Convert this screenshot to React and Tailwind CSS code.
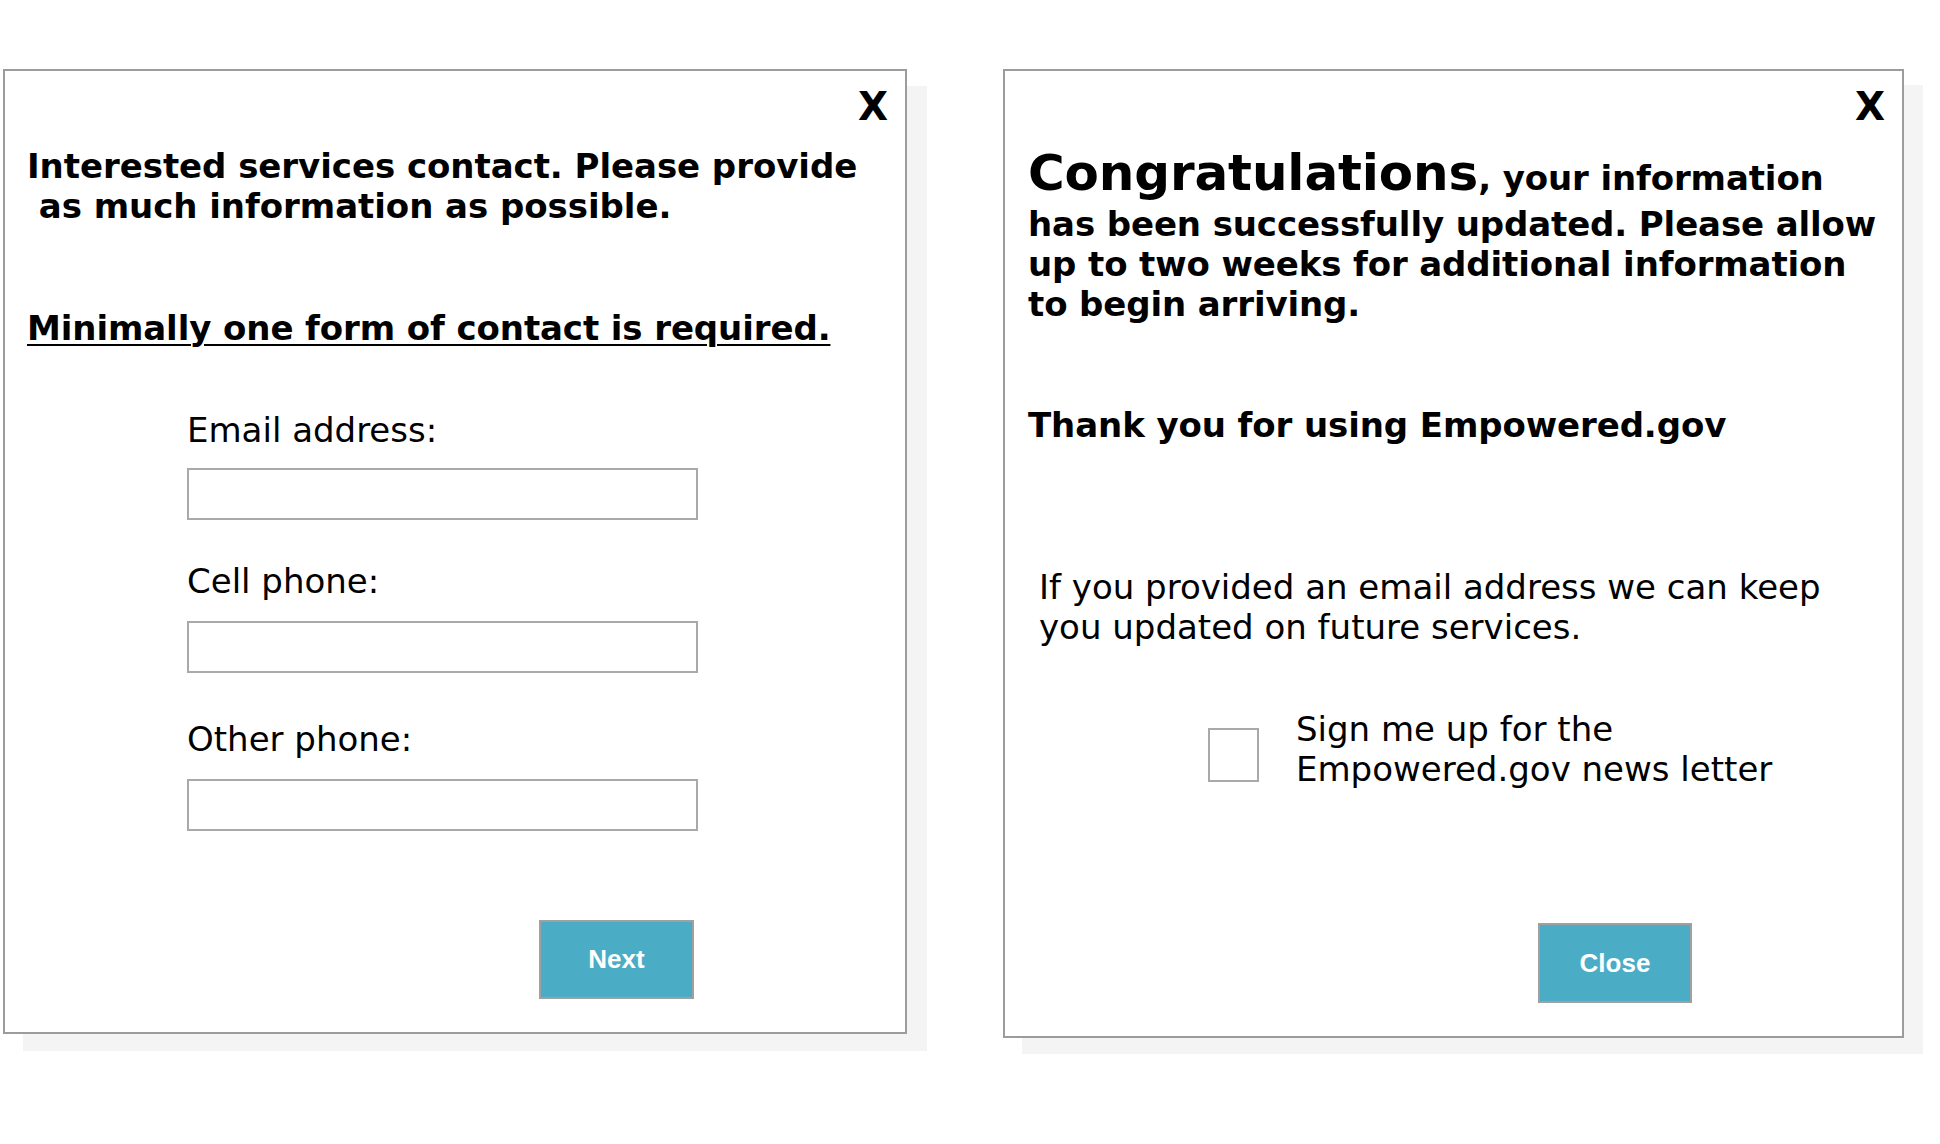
import { useState } from "react";

function CloseX({ className }) {
  return (
    <button
      type="button"
      aria-label="Close"
      className={`absolute top-[16px] text-[39px] font-bold leading-[40px] text-black ${className}`}
    >
      X
    </button>
  );
}

function ContactPanel() {
  const [email, setEmail] = useState("");
  const [cell, setCell] = useState("");
  const [other, setOther] = useState("");

  return (
    <section className="relative h-[965px] w-[904px] shrink-0 border-2 border-[#9c9c9c] bg-white pl-[22px] pt-[75px] shadow-[20px_17px_0_0_#f4f4f4]">
      <CloseX className="right-[17px]" />
      <h2 className="whitespace-nowrap text-[34px] font-bold leading-[40px] tracking-[-0.05px]">
        Interested services contact. Please provide
        <br />
        {"\u00a0"}as much information as possible.
      </h2>
      <p className="mt-[82px] whitespace-nowrap text-[34px] font-bold leading-[40px] tracking-[-0.1px] underline decoration-2 underline-offset-[4px]">
        Minimally one form of contact is required.
      </p>

      <form className="ml-[160px] mt-[62px] w-[511px]" onSubmit={(e) => e.preventDefault()}>
        <label className="block text-[34px] leading-[40px]">Email address:</label>
        <input
          value={email}
          onChange={(e) => setEmail(e.target.value)}
          className="mt-[18px] block h-[52px] w-full border-2 border-[#a9a9a9] bg-white px-3 text-2xl outline-none"
        />
        <label className="mt-[41px] block text-[34px] leading-[40px]">Cell phone:</label>
        <input
          value={cell}
          onChange={(e) => setCell(e.target.value)}
          className="mt-[20px] block h-[52px] w-full border-2 border-[#a9a9a9] bg-white px-3 text-2xl outline-none"
        />
        <label className="mt-[46px] block text-[34px] leading-[40px]">Other phone:</label>
        <input
          value={other}
          onChange={(e) => setOther(e.target.value)}
          className="mt-[20px] block h-[52px] w-full border-2 border-[#a9a9a9] bg-white px-3 text-2xl outline-none"
        />
        <div className="mt-[89px] flex justify-end pr-[4px]">
          <button
            type="submit"
            className="h-[79px] w-[155px] border-2 border-[#a0a0a0] bg-[#4bacc6] font-['Liberation_Sans',Arial,sans-serif] text-[26px] font-bold text-white"
          >
            Next
          </button>
        </div>
      </form>
    </section>
  );
}

function ThanksPanel() {
  const [subscribe, setSubscribe] = useState(false);

  return (
    <section className="relative h-[969px] w-[901px] shrink-0 border-2 border-[#9c9c9c] bg-white pl-[23px] pt-[72px] shadow-[19px_16px_0_0_#f4f4f4]">
      <CloseX className="right-[17px]" />
      <h2 className="whitespace-nowrap text-[34px] font-bold leading-[40px] tracking-[-0.12px]">
        <span className="text-[50px] leading-[61px]">Congratulations</span>, your information
        <br />
        has been successfully updated. Please allow
        <br />
        up to two weeks for additional information
        <br />
        to begin arriving.
      </h2>
      <p className="mt-[81px] whitespace-nowrap text-[34px] font-bold leading-[40px] tracking-[-0.1px]">
        Thank you for using Empowered.gov
      </p>
      <p className="ml-[11px] mt-[122px] whitespace-nowrap text-[34px] leading-[40px]">
        If you provided an email address we can keep
        <br />
        you updated on future services.
      </p>
      <label className="ml-[180px] mt-[62px] flex items-start gap-[37px]">
        <input
          type="checkbox"
          checked={subscribe}
          onChange={(e) => setSubscribe(e.target.checked)}
          className="mt-[19px] h-[54px] w-[51px] shrink-0 appearance-none border-2 border-[#a9a9a9] bg-white checked:bg-[#4bacc6]"
        />
        <span className="whitespace-nowrap text-[34px] leading-[40px]">
          Sign me up for the
          <br />
          Empowered.gov news letter
        </span>
      </label>
      <div className="ml-[510px] mt-[134px]">
        <button
          type="button"
          className="h-[80px] w-[154px] border-2 border-[#a0a0a0] bg-[#4bacc6] font-['Liberation_Sans',Arial,sans-serif] text-[26px] font-bold text-white"
        >
          Close
        </button>
      </div>
    </section>
  );
}

export default function App() {
  return (
    <div className="h-[1144px] w-[1940px] overflow-hidden bg-white font-['DejaVu_Sans',Verdana,sans-serif] text-black">
      <div className="flex items-start gap-[96px] pl-[3px] pt-[69px]">
        <ContactPanel />
        <ThanksPanel />
      </div>
    </div>
  );
}
